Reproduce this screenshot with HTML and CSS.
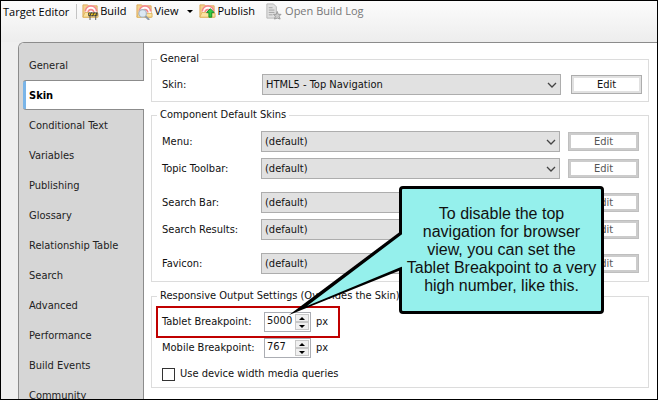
FILE: index.html
```html
<!DOCTYPE html>
<html lang="en">
<head>
<meta charset="utf-8">
<title>Target Editor</title>
<link rel="stylesheet" href="styles.css">
</head>
<body>
<svg class="defs" aria-hidden="true">
  <symbol id="folder" viewBox="0 0 18 18">
    <path d="M1 2h5l1 1h9v12H1z" fill="#f3d18c" stroke="#dca95a"/>
    <path d="M3 9a6 6 0 0 1 13 0v4H3z" fill="#fff"/>
    <path d="M3.500 9a6 6 0 0 1 12 0M6.500 10a3 3 0 0 1 6 0" fill="none" stroke="#f4888c" stroke-width="1.800"/>
    <path d="M1 15l2-5h4l2 1h8v4z" fill="#fae3a2" stroke="#dfb45f"/>
  </symbol>
  <symbol id="chevron" viewBox="0 0 10 6">
    <path d="M1 1l4 4 4-4" fill="none" stroke="#444" stroke-width="1.3"/>
  </symbol>
  <symbol id="up" viewBox="0 0 6 3"><path d="M0 3l3-3 3 3z"/></symbol>
  <symbol id="down" viewBox="0 0 6 3"><path d="M0 0h6l-3 3z"/></symbol>
</svg>
<div class="window">
  <header class="toolbar">
    <h1 class="title">Target Editor</h1>
    <button class="tool" type="button">
      <svg class="tool-icon" viewBox="0 0 18 18"><use href="#folder"/><path d="M7 10.500h9v3H7z" fill="#f7c81c" stroke="#444"/><path d="M10 10l-2 4M13 10l-2 4M16 10l-2 4" stroke="#333"/><path d="M8.500 14v4M14.500 14v4" stroke="#555"/></svg>Build</button>
    <button class="tool" type="button">
      <svg class="tool-icon" viewBox="0 0 18 18"><use href="#folder"/><circle cx="7" cy="11" r="4" fill="#dbe8f4" stroke="#a9b5c2" stroke-width="1.200"/><path d="M10 14l4 4" stroke="#8c99a8" stroke-width="2"/></svg>View
      <svg class="menu-arrow" viewBox="0 0 6 3"><use href="#down"/></svg></button>
    <button class="tool publish" type="button">
      <svg class="tool-icon" viewBox="0 0 18 18"><use href="#folder"/><path d="M12 6l4 4h-2.500v5h-3v-5H8z" fill="#2ecc40" stroke="#178a26"/></svg>Publish</button>
    <button class="tool log" type="button" disabled>
      <svg class="tool-icon" viewBox="0 0 18 18"><path d="M2 1h7l3 3v12H2z" fill="#e0e0e0" stroke="#b5b5b5"/><path d="M4 5h4M4 7.500h6M4 10h6M4 12.500h4" stroke="#a0a0a0"/><path d="M13 9l1 3h3l-2 2 1 3-3-1-3 1 1-3-2-2h3z" fill="#ccc" stroke="#9a9a9a"/></svg>Open Build Log</button>
  </header>
  <div class="panel">
    <nav class="tabs">
      <a href="#general">General</a>
      <a href="#skin" class="active" aria-current="page">Skin</a>
      <a href="#conditional">Conditional Text</a>
      <a href="#variables">Variables</a>
      <a href="#publishing">Publishing</a>
      <a href="#glossary">Glossary</a>
      <a href="#relationship">Relationship Table</a>
      <a href="#search">Search</a>
      <a href="#advanced">Advanced</a>
      <a href="#performance">Performance</a>
      <a href="#events">Build Events</a>
      <a href="#community">Community</a>
    </nav>
    <main class="content">
      <fieldset class="group general">
        <legend>General</legend>
        <div class="row">
          <label for="skin">Skin:</label>
          <div class="combo"><select id="skin"><option>HTML5 - Top Navigation</option></select><svg><use href="#chevron"/></svg></div>
          <button class="edit" type="button">Edit</button>
        </div>
      </fieldset>
      <fieldset class="group components">
        <legend>Component Default Skins</legend>
        <div class="row">
          <label for="menu">Menu:</label>
          <div class="combo"><select id="menu"><option>(default)</option></select><svg><use href="#chevron"/></svg></div>
          <button class="edit" type="button" disabled>Edit</button>
        </div>
        <div class="row">
          <label for="toolbar">Topic Toolbar:</label>
          <div class="combo"><select id="toolbar"><option>(default)</option></select><svg><use href="#chevron"/></svg></div>
          <button class="edit" type="button" disabled>Edit</button>
        </div>
        <div class="row spaced">
          <label for="searchbar">Search Bar:</label>
          <div class="combo"><select id="searchbar"><option>(default)</option></select><svg><use href="#chevron"/></svg></div>
          <button class="edit" type="button" disabled>Edit</button>
        </div>
        <div class="row">
          <label for="results">Search Results:</label>
          <div class="combo"><select id="results"><option>(default)</option></select><svg><use href="#chevron"/></svg></div>
          <button class="edit" type="button" disabled>Edit</button>
        </div>
        <div class="row spaced">
          <label for="favicon">Favicon:</label>
          <div class="combo"><select id="favicon"><option>(default)</option></select><svg><use href="#chevron"/></svg></div>
          <button class="edit" type="button" disabled>Edit</button>
        </div>
      </fieldset>
      <fieldset class="group responsive">
        <legend>Responsive Output Settings (Overrides the Skin)</legend>
        <div class="breakpoint highlighted">
          <label for="tablet">Tablet Breakpoint:</label>
          <div class="spinner"><input id="tablet" type="number" value="5000"><div class="steps"><button type="button" aria-label="Increase"><svg><use href="#up"/></svg></button><button type="button" aria-label="Decrease"><svg><use href="#down"/></svg></button></div></div>
          <span>px</span>
        </div>
        <div class="breakpoint">
          <label for="mobile">Mobile Breakpoint:</label>
          <div class="spinner"><input id="mobile" type="number" value="767"><div class="steps"><button type="button" aria-label="Increase"><svg><use href="#up"/></svg></button><button type="button" aria-label="Decrease"><svg><use href="#down"/></svg></button></div></div>
          <span>px</span>
        </div>
        <label class="check"><input type="checkbox">Use device width media queries</label>
      </fieldset>
    </main>
  </div>
  <aside class="callout">
    <p>To disable the top navigation for browser view, you can set the Tablet Breakpoint to a very high number, like this.</p>
    <svg class="tail" viewBox="0 0 116 86"><path d="M112 0L0 84L112 39z"/><path d="M116 1L112 4L18 75L112 36L116 35z" fill="#95f0ec"/></svg>
  </aside>
</div>
</body>
</html>
```

FILE: styles.css
```css
* { box-sizing: border-box; }

body {
  margin: 0;
  font: 11px/16px "DejaVu Sans Condensed", "DejaVu Sans", sans-serif;
  color: #111;
}

button, input, select { font: inherit; color: inherit; }

.defs { position: absolute; width: 0; height: 0; }

.window {
  position: relative;
  display: flex;
  flex-direction: column;
  height: 100vh;
  overflow: hidden;
  border: 1px solid #000;
  background: #efefef;
}

.toolbar {
  display: flex;
  align-items: flex-start;
  height: 41px;
  flex: none;
  padding: 1px 0 0 2px;
  background: linear-gradient(#fcfcfc, #ededed);
  color: #000;
  font: 11px/18px "Open Sans", sans-serif;
}

.title {
  margin: 2px 0 0;
  padding-right: 7px;
  border-right: 1px solid #c4c4c4;
  font: inherit;
  line-height: 15px;
}

.tool {
  display: flex;
  align-items: center;
  gap: 1px;
  margin-left: 5px;
  padding: 0;
  border: 0;
  background: none;
  white-space: nowrap;
}

.tool + .tool { margin-left: 10px; }
.tool + .publish { margin-left: 6px; }
.log { gap: 3px; }

.tool:disabled { color: #777; }
.tool-icon { width: 17px; height: 17px; }
.menu-arrow { width: 6px; height: 3px; margin: 0 0 0 8px; }

.panel {
  display: flex;
  flex: 1;
  min-height: 0;
  margin-left: 17px;
  border: solid #8c8c8c;
  border-width: 1px 0 0 1px;
  border-top-left-radius: 6px;
  background: #fff;
  overflow: hidden;
}

.tabs {
  flex: none;
  width: 125px;
  padding: 7px 0 0 4px;
  background: linear-gradient(#8c8c8c, #8c8c8c) right / 1px 100% no-repeat #d6d6d6;
}

.tabs a {
  display: block;
  height: 30px;
  padding-left: 6px;
  line-height: 31px;
  color: #222;
  text-decoration: none;
  white-space: nowrap;
}

.tabs .active {
  border: solid #8c8c8c;
  border-width: 1px 0;
  border-radius: 3px 0 0 3px;
  background: linear-gradient(#7ab5e8, #7ab5e8) left / 3px 100% no-repeat #fff;
  color: #000;
  font-weight: bold;
  line-height: 29px;
}

.content { flex: 1; min-width: 0; padding: 8px 8px 0 7px; }

.group {
  min-width: 0;
  margin: 0;
  padding: 0 8px 7px 10px;
  border: 1px solid #dcdcdc;
}

.group legend { margin-left: -5px; padding: 0 3px; }

.row {
  display: grid;
  align-items: center;
  margin-bottom: 6px;
}

.general { margin-bottom: 5px; padding-right: 6px; padding-bottom: 6px; }
.general .row { grid-template-columns: 100px 1fr 81px; margin: 7px 0 0; }
.general .edit { margin-left: 10px; }

.components { margin-bottom: 6px; padding-top: 8px; padding-right: 9px; padding-bottom: 1px; }
.components .row { grid-template-columns: 99px 1fr 79px; }
.components .edit { margin-left: 8px; }
.components .spaced { margin-top: 13px; }

.combo { position: relative; }

.combo select {
  display: block;
  width: 100%;
  height: 21px;
  padding: 0 24px 0 3px;
  border: 1px solid #adadad;
  border-radius: 0;
  background: #e1e1e1;
  appearance: none;
}

.combo svg {
  position: absolute;
  top: 8px;
  right: 4px;
  width: 10px;
  height: 6px;
  pointer-events: none;
}

.edit {
  height: 19px;
  margin: 0;
  padding: 0;
  border: 1px solid #adadad;
  background: #fff;
  box-shadow: inset 0 0 0 2px #e1e1e1;
  line-height: 15px;
}

.edit:disabled {
  border-color: #bfbfbf;
  box-shadow: inset 0 0 0 2px #ccc;
  color: #555;
}

.responsive { padding-bottom: 5px; }

.breakpoint {
  display: flex;
  align-items: center;
  height: 26px;
}

.breakpoint label { width: 102px; }

.highlighted {
  width: 184px;
  height: 32px;
  margin: 2px 0 -3px -6px;
  padding-left: 4px;
  border: 2px solid #c00000;
}

.spinner {
  display: flex;
  width: 47px;
  height: 20px;
  margin-right: 5px;
  padding: 1px;
  border: 1px solid #abadb3;
  background: #fff;
}

.spinner input {
  flex: 1;
  min-width: 0;
  padding: 0 0 2px 1px;
  border: 0;
  background: none;
  appearance: textfield;
}

.spinner input::-webkit-inner-spin-button { display: none; }

.steps { display: grid; width: 14px; }

.steps button {
  display: grid;
  place-items: center;
  padding: 0;
  border: 1px solid #c8c8c8;
  background: #f0f0f0;
}

.steps svg { width: 6px; height: 3px; }

.check {
  display: flex;
  align-items: center;
  gap: 5px;
  margin-top: 5px;
}

.check input {
  width: 13px;
  height: 13px;
  margin: 0;
  border: 1px solid #333;
  background: #fff;
  appearance: none;
}

.callout {
  position: absolute;
  top: 185px;
  left: 398px;
  width: 205px;
  padding: 16px 3px;
  border: 3px solid #000;
  border-radius: 4px;
  background: #95f0ec;
  color: #111;
  font: 16px/18px "Liberation Sans", sans-serif;
  text-align: center;
}

.callout p { margin: 0; }

.tail {
  position: absolute;
  top: 42px;
  right: 196px;
  width: 116px;
  height: 86px;
}
```
